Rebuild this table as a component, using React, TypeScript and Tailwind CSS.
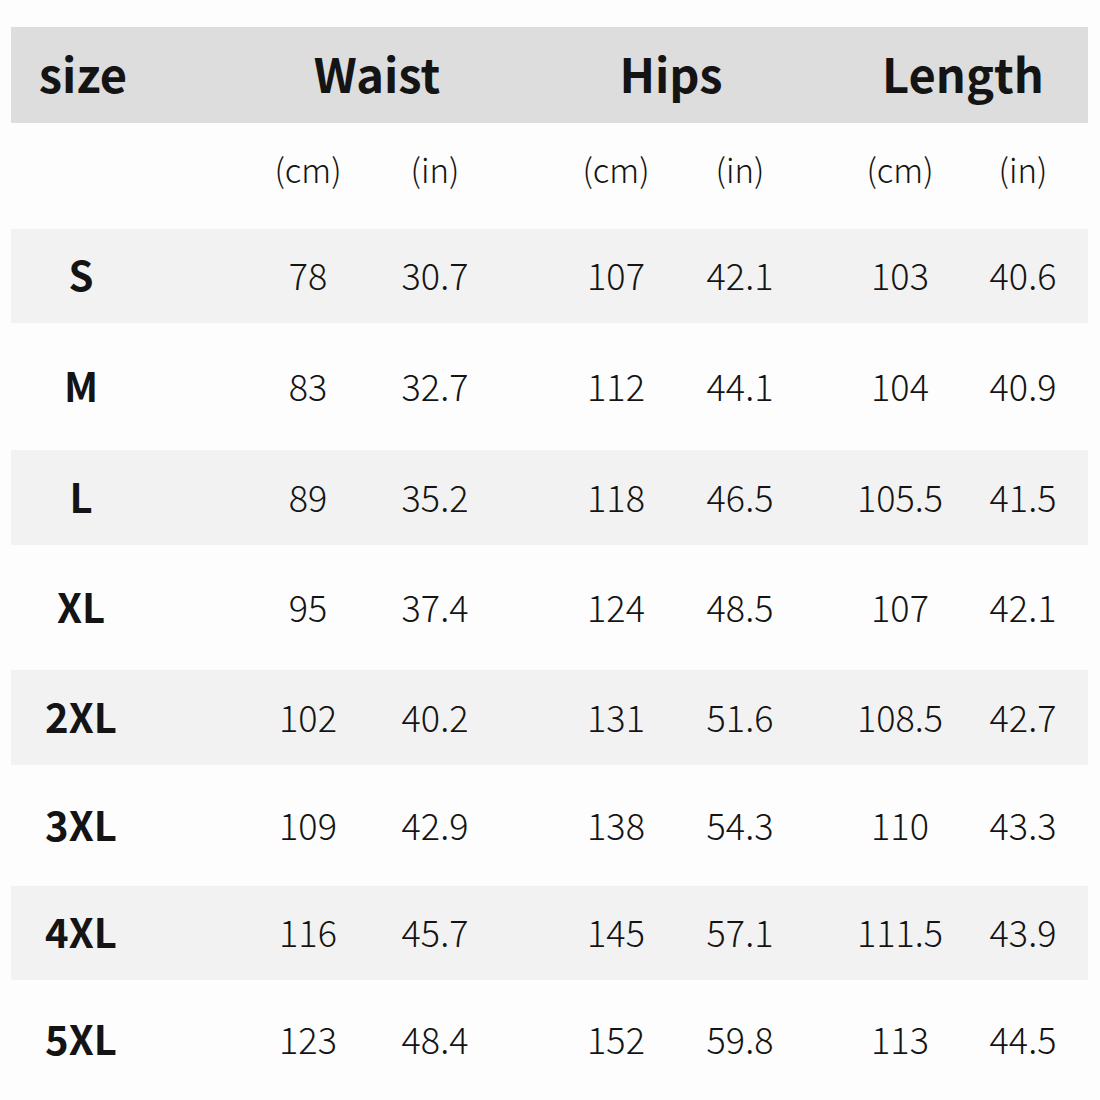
import React from "react";

type Row = { size: string; v: [string, string, string, string, string, string]; gray: boolean; h: string };

const rows: Row[] = [
  { size: "S", v: ["78", "30.7", "107", "42.1", "103", "40.6"], gray: true, h: "h-[94px]" },
  { size: "M", v: ["83", "32.7", "112", "44.1", "104", "40.9"], gray: false, h: "h-[127px]" },
  { size: "L", v: ["89", "35.2", "118", "46.5", "105.5", "41.5"], gray: true, h: "h-[95px]" },
  { size: "XL", v: ["95", "37.4", "124", "48.5", "107", "42.1"], gray: false, h: "h-[125px]" },
  { size: "2XL", v: ["102", "40.2", "131", "51.6", "108.5", "42.7"], gray: true, h: "h-[95px]" },
  { size: "3XL", v: ["109", "42.9", "138", "54.3", "110", "43.3"], gray: false, h: "h-[121px]" },
  { size: "4XL", v: ["116", "45.7", "145", "57.1", "111.5", "43.9"], gray: true, h: "h-[94px]" },
  { size: "5XL", v: ["123", "48.4", "152", "59.8", "113", "44.5"], gray: false, h: "h-[120px]" },
];

function Values({ v }: { v: string[] }) {
  return (
    <>
      <div className="ml-[103px] w-[100px] text-center">{v[0]}</div>
      <div className="ml-[27px] w-[100px] text-center">{v[1]}</div>
      <div className="ml-[81px] w-[100px] text-center">{v[2]}</div>
      <div className="ml-[24px] w-[100px] text-center">{v[3]}</div>
      <div className="ml-[60px] w-[100px] text-center">{v[4]}</div>
      <div className="ml-[23px] w-[100px] text-center">{v[5]}</div>
    </>
  );
}

export default function App() {
  return (
    <div
      className="w-[1100px] h-[1100px] overflow-hidden bg-[#fdfdfd] pt-[27px] pl-[11px] text-[#141414]"
      style={{ fontFamily: '"Noto Sans CJK SC", "Noto Sans", sans-serif' }}
    >
      <div className="w-[1077px]">
        <div className="flex items-center h-[96px] pb-[4px] bg-[#dddddd] text-[47px] font-bold">
          <div className="w-[144px] text-center">size</div>
          <div className="ml-[103px] w-[238px] text-center">Waist</div>
          <div className="ml-[70px] w-[210px] text-center">Hips</div>
          <div className="ml-[74px] w-[226px] text-center">Length</div>
        </div>
        <div className="flex items-center h-[106px] pb-[12px] text-[33px] font-light">
          <div className="w-[144px]" />
          <Values v={["(cm)", "(in)", "(cm)", "(in)", "(cm)", "(in)"]} />
        </div>
        {rows.map((r) => (
          <div
            key={r.size}
            className={`flex items-center ${r.h} pb-[4px] ${r.gray ? "bg-[#f2f2f2]" : ""} text-[36px] font-light`}
          >
            <div className="w-[140px] text-center text-[40px] font-bold">{r.size}</div>
            <div className="w-[4px]" />
            <Values v={r.v} />
          </div>
        ))}
      </div>
    </div>
  );
}
